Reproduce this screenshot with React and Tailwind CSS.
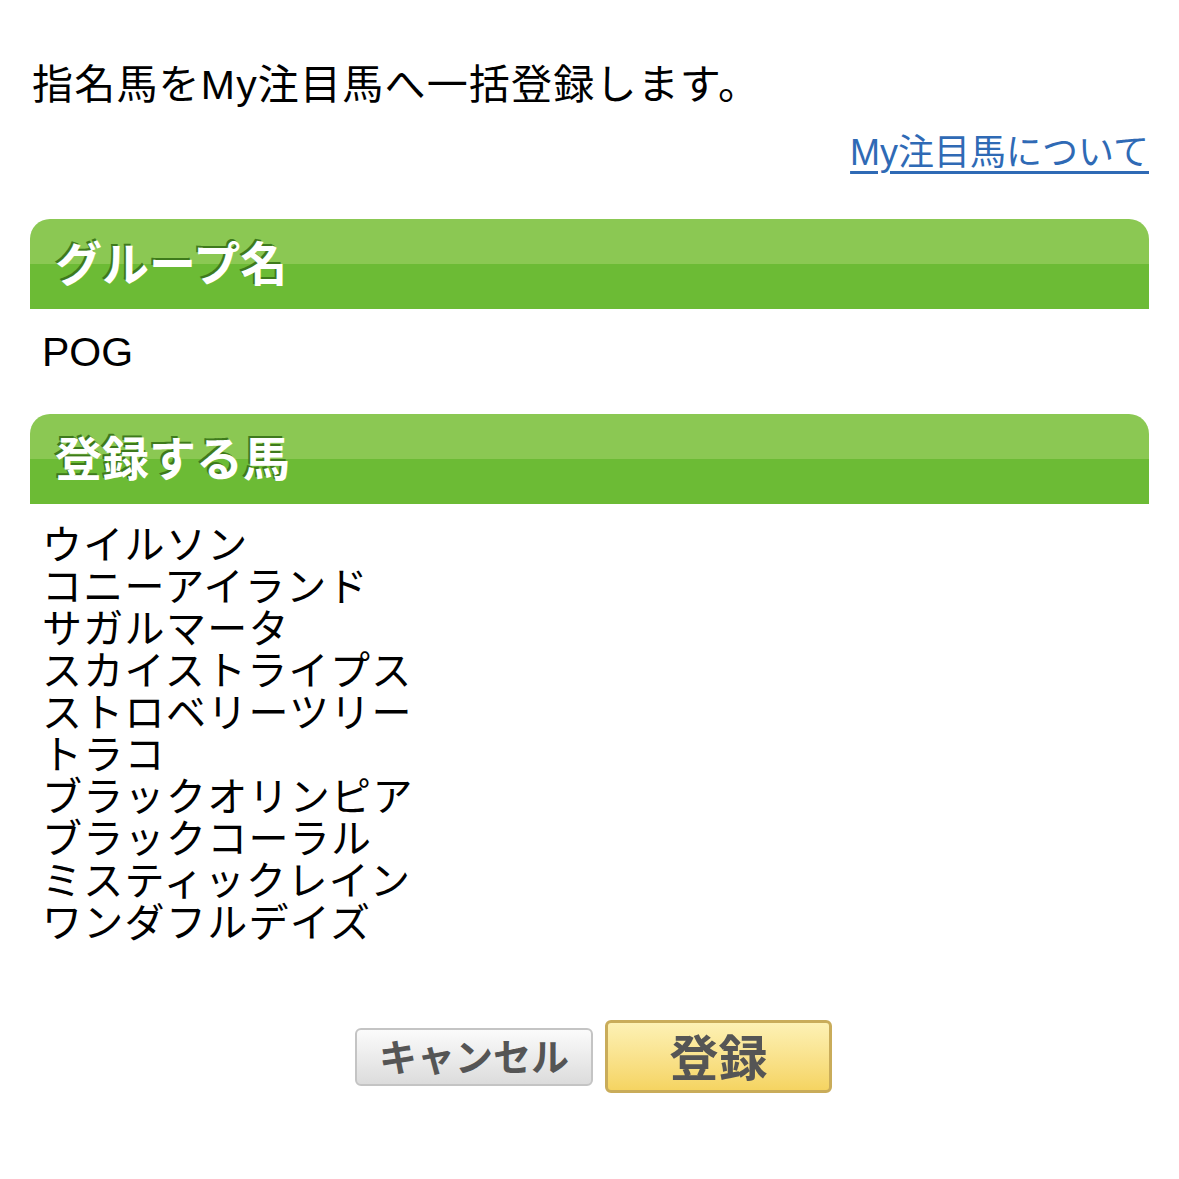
const horses = [
  'ウイルソン',
  'コニーアイランド',
  'サガルマータ',
  'スカイストライプス',
  'ストロベリーツリー',
  'トラコ',
  'ブラックオリンピア',
  'ブラックコーラル',
  'ミスティックレイン',
  'ワンダフルデイズ',
];

function Heading({ children }) {
  return (
    <div className="h-[90px] rounded-t-[20px] overflow-hidden flex flex-col relative">
      <div className="h-[45px] bg-[#8bc853]" />
      <div className="flex-1 bg-[#6cbb35]" />
      <div className="absolute inset-0 flex items-center pl-[25px] pt-[2px] text-[47px] font-bold text-white [text-shadow:-2px_-2px_0_#3e7a1c]">
        {children}
      </div>
    </div>
  );
}

export default function App() {
  return (
    <div
      className="min-h-[1179px] bg-white px-[30px] text-black"
      style={{ fontFamily: '"Liberation Sans", "Noto Sans CJK JP", sans-serif' }}
    >
      <p className="pt-[61px] pl-[2px] text-[41px] leading-[48px] tracking-[1.2px]">指名馬をMy注目馬へ一括登録します。</p>
      <div className="mt-[22px] flex justify-end">
        <a href="#" className="text-[36px] leading-[44px] text-[#2f6ab5] underline decoration-[3px] underline-offset-[6px]">
          My注目馬について
        </a>
      </div>

      <div className="mt-[44px]">
        <Heading>グループ名</Heading>
      </div>
      <p className="pl-[12px] pt-[21px] text-[41px] leading-[44px]">POG</p>

      <div className="mt-[40px]">
        <Heading>登録する馬</Heading>
      </div>
      <ul className="pl-[12px] pt-[20px] text-[40px] leading-[42px] tracking-[1.3px]">
        {horses.map((h) => (
          <li key={h}>{h}</li>
        ))}
      </ul>

      <div className="mt-[76px] flex justify-center items-center gap-[12px] pl-[8px]">
        <button className="h-[58px] w-[238px] rounded-[6px] border-2 border-[#c4c4c4] bg-gradient-to-b from-[#fbfbfb] to-[#dcdcdc] text-[38px] font-bold text-[#555]">
          キャンセル
        </button>
        <button className="h-[73px] w-[227px] rounded-[6px] border-[3px] border-[#c9ac5a] bg-gradient-to-b from-[#fdf1b4] to-[#f5d461] text-[49px] font-bold text-[#555]">
          登録
        </button>
      </div>
    </div>
  );
}
